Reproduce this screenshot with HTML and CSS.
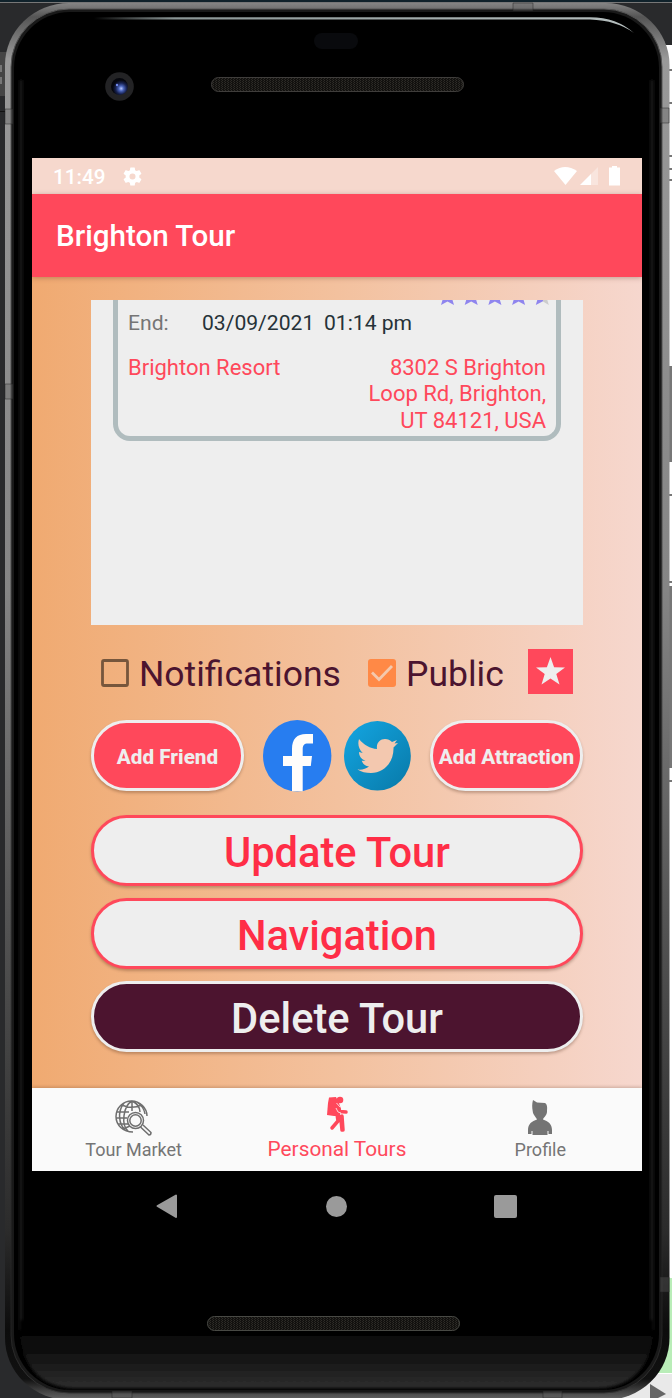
FILE: index.html
```html
<!DOCTYPE html>
<html lang="en">
<head>
<meta charset="utf-8">
<title>Brighton Tour</title>
<link rel="stylesheet" href="styles.css">
</head>
<body>
<div class="stage">
<svg class="device" width="672" height="1398" viewBox="0 0 672 1398" aria-hidden="true">
  <defs>
    <linearGradient id="rim" x1="0" y1="0" x2="0" y2="1">
      <stop offset="0" stop-color="#858585"/><stop offset=".01" stop-color="#555"/><stop offset=".04" stop-color="#999"/>
      <stop offset=".42" stop-color="#858585"/><stop offset=".65" stop-color="#555"/><stop offset=".88" stop-color="#2b2b2b"/><stop offset=".95" stop-color="#0c0c0c"/><stop offset=".985" stop-color="#111"/><stop offset="1" stop-color="#666"/>
    </linearGradient>
    <linearGradient id="edge" x1="0" y1="0" x2="0" y2="1"><stop offset="0" stop-color="#555"/><stop offset=".5" stop-color="#4a4a4a"/><stop offset=".95" stop-color="#222"/><stop offset="1" stop-color="#333"/></linearGradient>
    <linearGradient id="chin" x1="0" y1="0" x2="0" y2="1"><stop offset="0" stop-color="#000"/><stop offset=".4" stop-color="#0b0b0b"/><stop offset="1" stop-color="#2e2e2e"/></linearGradient>
    <linearGradient id="shine"><stop offset="0" stop-color="#a5b0b0" stop-opacity="0"/><stop offset=".15" stop-color="#8a9595"/><stop offset="1" stop-color="#b5bebe"/></linearGradient>
    <radialGradient id="lens" cx=".6" cy=".62"><stop offset="0" stop-color="#b7c8ff"/><stop offset=".3" stop-color="#4862b8"/><stop offset=".65" stop-color="#17214f"/><stop offset="1" stop-color="#05060c"/></radialGradient>
    <pattern id="mesh" width="3" height="2" patternUnits="userSpaceOnUse"><rect width="3" height="2" fill="#12110f"/><rect width="1" height="1" fill="#2e2c28"/><rect x="2" y="1" width="1" height="1" fill="#292723"/></pattern>
    <filter id="soft" filterUnits="userSpaceOnUse" x="0" y="0" width="672" height="1398"><feGaussianBlur stdDeviation="1.5"/></filter>
  </defs>
  <rect width="672" height="1398" fill="#292a2c"/>
  <path d="M0 2.500H672" stroke="#777" />
  <path d="M0 1H672" stroke="#10222b" stroke-width="2"/>
  <path d="M0 52H10V96H0z" fill="#454545"/><path d="M0 65h2v7H0zM0 77h2v7H0z" fill="#777"/>
  <path d="M0 111.500H6" stroke="#111"/>
  <path d="M640 45H672V1398H640z" fill="#fff"/>
  <path d="M664 366h8v96h-8zM664 586h8v182h-8z" fill="#777"/>
  <path d="M669 70h3M669 103h3M669 156h3M669 169h3M669 180h3M669 495h3M669 582h3M669 781h3" stroke="#777" stroke-width="2"/>
  <path d="M640 1278h32v95h-32z" fill="#b9edb8"/><path d="M620 1374h52v24h-52z" fill="#e9e9e9"/><path d="M650 1384l16 10-8 4h-8z" fill="#666"/>
  <rect x="5" y="3" width="664.500" height="1397" rx="64" ry="62" fill="url(#rim)"/>
  <rect x="11" y="9" width="651" height="1384" rx="58" fill="#191919" stroke="url(#edge)"/>
  <rect x="14" y="12" width="645" height="1378" rx="56" fill="#000"/>
  <path d="M21 80V1330M652 80V1330" stroke="#1b1b1b" stroke-width="3" filter="url(#soft)"/>
  <path d="M20 1320H653V1338Q645 1387 598 1388H74Q28 1387 20 1338z" fill="url(#chin)" filter="url(#soft)"/>
  <path d="M94 17.200H590Q617 17.500 634 33Q617 20.500 590 19.500H94z" fill="url(#shine)"/>
  <path d="M5 109h8v15H5zM5 384h8v15H5zM660 108h9v15h-9zM660 1277h9v15h-9zM513 3h20v8h-20zM112 1391h20v7h-20zM543 1391h19v7h-19z" fill="#606060" fill-opacity=".35" stroke="#222" stroke-opacity=".45"/>
  <rect x="314" y="33" width="44" height="16" rx="8" fill="#090a0d"/>
  <circle cx="119.500" cy="86.500" r="14.300" fill="#232325"/><circle cx="119.500" cy="86.500" r="8.500" fill="url(#lens)"/><circle cx="117" cy="85" r="1.200" fill="#7189ed"/>
  <rect x="211.500" y="77.500" width="252" height="14" rx="7" fill="url(#mesh)" stroke="#3f3d3b"/>
  <rect x="207.500" y="1316.500" width="252" height="14" rx="7" fill="url(#mesh)" stroke="#484944"/>
</svg>
<main class="screen">
  <header class="status">
    <span class="clock">11:49</span>
    <svg class="gear" viewBox="2 2 20 20"><path fill="#fff" d="M19.140 12.940a7 7 0 0 0 0-1.880l2.030-1.580a.5.5 0 0 0 .12-.61l-1.920-3.320a.5.5 0 0 0-.59-.22l-2.390.96a7 7 0 0 0-1.620-.94l-.36-2.540a.5.5 0 0 0-.48-.41h-3.840a.5.5 0 0 0-.47.41l-.36 2.540a7 7 0 0 0-1.620.94l-2.390-.96a.5.5 0 0 0-.59.22L2.740 8.870a.5.5 0 0 0 .12.61l2.030 1.580a7 7 0 0 0 0 1.880l-2.030 1.580a.5.5 0 0 0-.12.61l1.920 3.320c.12.22.37.290.59.220l2.390-.96c.5.380 1.030.7 1.620.940l.36 2.540c.5.240.24.410.48.410h3.840c.24 0 .44-.17.47-.41l.36-2.540a7 7 0 0 0 1.620-.94l2.390.96c.22.080.47 0 .59-.22l1.920-3.320a.5.5 0 0 0-.12-.61zM12 15.200a3.200 3.200 0 1 1 0-6.400 3.200 3.200 0 0 1 0 6.400z"/></svg>
    <svg class="signals" width="70" height="22" viewBox="0 0 70 22"><path fill="#fff" d="M1 5Q12-3 24 5L12.500 19z"/><path fill="#fff" opacity=".35" d="M45 1V19H27z"/><path fill="#fff" d="M38 8V19H27zM59 1.500V0h5v1.500h3V19.500H56V1.500z"/></svg>
  </header>
  <h1 class="appbar">Brighton Tour</h1>
  <section class="content">
    <div class="viewport">
      <article class="card">
        <div class="stars"><svg width="109" height="9" viewBox="0 0 109 9"><defs><path id="tip" d="M1.500 0H11.500L13 5L6.500 1.500L0 5z"/></defs><g fill="#8f85ee"><use href="#tip"/><use href="#tip" x="23.700"/><use href="#tip" x="47.400"/><use href="#tip" x="71.100"/><path d="M96.300 0H102V1.200L94.800 5z"/></g><path fill="#ccc" d="M102 0H106.300L107.800 5L102 1.500z"/></svg></div>
        <div class="when"><span class="label">End:</span><span class="date">03/09/2021</span><span class="time">01:14 pm</span></div>
        <div class="place"><span>Brighton Resort</span><address>8302 S Brighton<br>Loop Rd, Brighton,<br>UT 84121, USA</address></div>
      </article>
    </div>
    <div class="options">
      <svg class="box" viewBox="0 0 28 28"><rect x="1.500" y="1.500" width="25" height="25" rx="1.500" fill="none" stroke="#76563c" stroke-width="2.800"/></svg>
      <span class="notify">Notifications</span>
      <svg class="box" viewBox="0 0 28 28"><rect width="28" height="28" rx="3" fill="#ff8946"/><path d="M4 13.500l7 7L24 7" fill="none" stroke="#f4c9ad" stroke-width="2.800"/></svg>
      <span class="public">Public</span>
      <button class="fav" aria-label="Favorite"><svg width="45" height="45" viewBox="0 0 45 45"><path fill="#eee" d="M22.500 8L26.100 18.200 37 18.500 28.300 25 31.500 35.500 22.500 29.400 13.500 35.500 16.700 25 8 18.500 18.900 18.200z"/></svg></button>
    </div>
    <div class="actions">
      <button class="pill small">Add Friend</button>
      <svg class="fb" width="69" height="72" viewBox="0 0 69 72"><ellipse cx="34.200" cy="35.800" rx="34.200" ry="35.800" fill="#277df0"/><path fill="#fffdfb" d="M29 71.300V46H20V36H29V29C29 19 34 14 43 14H50V23.500H45C41 23.500 39.700 25.500 39.700 29V36H49L47.800 46H39.700V71.300z"/></svg>
      <svg class="tw" width="67" height="70" viewBox="0 0 67 70"><defs><linearGradient id="tg" x2="1" y2="1"><stop stop-color="#14a6e2"/><stop offset="1" stop-color="#0879a8"/></linearGradient></defs><ellipse cx="33.400" cy="34.800" rx="33.400" ry="34.800" fill="url(#tg)"/><path fill="#f3c8af" d="M15 18C20 24 26 27.500 33 28C32 22 36 18 41 18C44 18 46 19 48 21L53 19L50.500 22.500L54 22L49.500 26.500C50 41 40 52 27 52C22 52 17 51 13.500 48.500C18 49 22 48 25 45.500C21 45 19 43 17.700 39.800H21.500C17 38 15 35 15 31L18.700 32C14.500 28 13.500 23 15 18z"/></svg>
      <button class="pill small">Add Attraction</button>
    </div>
    <div class="commands">
      <button class="pill light">Update Tour</button>
      <button class="pill light">Navigation</button>
      <button class="pill dark">Delete Tour</button>
    </div>
  </section>
  <nav class="tabs">
    <a class="tab market"><svg width="38" height="38" viewBox="0 0 38 38" fill="none" stroke="#6f6f6f" stroke-width="1.500"><path d="M18 33C8 33 1 26 1 17.500S8 2 16.500 2 32 9 32 17M17 2V12M17 2C8 7 6 26 13 32M17 2C23 5 25 9 25 13M7 6C13 9 20 9 27 6M2 13H14M1 19H12M3 25H14M8 30L15 27M9 4C2 13 4 25 10 31M22 3Q29 8 30 15"/><circle cx="20.500" cy="21.500" r="8" fill="#fafafa"/><circle cx="20.500" cy="21.500" r="5.700"/><path d="M25.500 28L34 36Q36 36 36 33.500L28 26"/></svg><span>Tour Market</span></a>
    <a class="tab active"><svg width="22" height="38" viewBox="0 0 22 38"><circle cx="14" cy="4" r="3.300" fill="#ff485b"/><path fill="#ff485b" d="M3 1.500L10 1 13 7 15 13 13 20 8 20 1 19 2 7z"/><path d="M11 9L14 15.500L20 16M11 18L12 25L6 32M12 18L15 24L16 34M16 20L17 34" fill="none" stroke="#ff485b" stroke-width="3.500" stroke-linecap="round" stroke-linejoin="round"/><path d="M10.500 7L14 11M10 12L12 16L15 17" fill="none" stroke="#fafafa" stroke-width=".8"/></svg><span>Personal Tours</span></a>
    <a class="tab profile"><svg width="26" height="38" viewBox="0 0 26 38"><path fill="#747474" d="M6 1L10 3.500 18 4C21 6 20 10 20 13C19.500 17 16 19 16 20.500C21 22 25 25 25 31V35H21.500V32H20.500V36H5.500V32H4.500V35H1V31C1 25 5 22 10 20.500C9 18 6 16 5.700 12C5 8 5 5 6 1z"/></svg><span>Profile</span></a>
  </nav>
</main>
<footer class="system">
  <svg width="22" height="25" viewBox="0 0 22 25"><path d="M1.500 12L20 1.500V23z" fill="#9a9a9a" stroke="#9a9a9a" stroke-width="2" stroke-linejoin="round"/></svg>
  <span class="home"></span><span class="recent"></span>
</footer>
</div>
</body>
</html>
```

FILE: styles.css
```css
* { box-sizing: border-box; }
body { margin: 0; font-family: Roboto, sans-serif; }
button { font-family: inherit; margin: 0; padding: 0; }
.stage { position: relative; width: 672px; height: 1398px; padding: 158px 30px 0 32px; overflow: hidden; }
.device { position: absolute; inset: 0; display: block; }
.screen { position: relative; width: 610px; height: 1013px; display: flex; flex-direction: column; overflow: hidden; }
.status { height: 36px; flex: none; display: flex; align-items: center; padding: 1px 19px 0 21px; background: #f6d8cd; color: #fff; }
.clock { font-size: 20.7px; font-weight: 500; width: 70px; }
.gear { width: 19px; height: 19px; }
.signals { margin-left: auto; }
.appbar { height: 83px; flex: none; margin: 0; padding: 1px 24px 0; display: flex; align-items: center; background: #ff485b; color: #fff; font-size: 29.6px; font-weight: 500; box-shadow: 0 1px 5px rgba(80,30,20,.3); z-index: 1; }
.content { height: 811px; flex: none; padding: 23px 59px 0; background: linear-gradient(90deg, #f0aa71, #f3c19e 50%, #f6d7ce); }
.viewport { height: 325px; padding: 0 22px; background: #eee; overflow: hidden; }
.card { height: 141px; border: 5px solid #b0bcbe; border-top: 0; border-radius: 0 0 17px 17px; padding: 0 10px; font-size: 22px; line-height: 26.500px; }
.stars { height: 9px; display: flex; justify-content: flex-end; }
.stars svg { display: block; margin-right: -4px; }
.when { display: flex; color: #263238; padding-top: 1px; font-size: 21.100px; }
.label { width: 74px; color: #757575; }
.date { width: 122px; }
.place { display: flex; justify-content: space-between; padding-top: 18px; color: #ff485b; }
address { font-style: normal; text-align: right; }
.options { height: 95px; display: flex; align-items: center; padding: 0 10px; color: #4c142f; font-size: 35.500px; }
.box { width: 28px; height: 28px; flex: none; }
.notify { width: 229px; margin-left: 10px; padding-top: 2px; }
.public { margin-left: 10px; padding-top: 2px; }
.fav { margin: 0 0 3px auto; width: 45px; height: 45px; border: 0; background: #ff485b; }
.fav svg { display: block; }
.actions { height: 71px; display: flex; align-items: center; }
.pill { display: flex; align-items: center; justify-content: center; height: 71px; border: 3px solid #eee; border-radius: 36px; box-shadow: 0 2px 3px rgba(70,35,20,.3); white-space: nowrap; }
.small { width: 153px; flex: none; background: #ff485b; color: #eee; font-size: 20.700px; font-weight: 800; padding-top: 2px; }
.fb { margin-left: 19px; flex: none; }
.tw { margin: 0 19px 0 12px; flex: none; }
.commands { display: flex; flex-direction: column; gap: 12px; margin-top: 24px; }
.light { background: #eee; color: #ff2d46; border-color: #ff485b; font-size: 41.600px; font-weight: 500; padding-top: 3px; }
.dark { background: #4c142f; color: #eee; font-size: 41.600px; font-weight: 500; padding-top: 3px; }
.tabs { height: 83px; flex: none; display: flex; background: #fafafa; box-shadow: 0 -1px 3px rgba(80,40,20,.25); }
.tab { width: 203.333px; display: flex; flex-direction: column; align-items: center; color: #757575; font-size: 18px; line-height: 22px; padding-top: 11px; }
.tab svg { flex: none; height: 38px; }
.tab span { margin-top: 2px; }
.active { color: #ff485b; font-size: 20.800px; padding-top: 8px; }
.active span { margin-top: 4px; }
.system { position: relative; width: 610px; height: 70px; display: flex; align-items: center; padding-left: 124px; }
.home { width: 21px; height: 21px; border-radius: 50%; background: #9a9a9a; margin-left: 148px; }
.recent { width: 23px; height: 23px; border-radius: 2px; background: #9a9a9a; margin-left: 147px; }
```
